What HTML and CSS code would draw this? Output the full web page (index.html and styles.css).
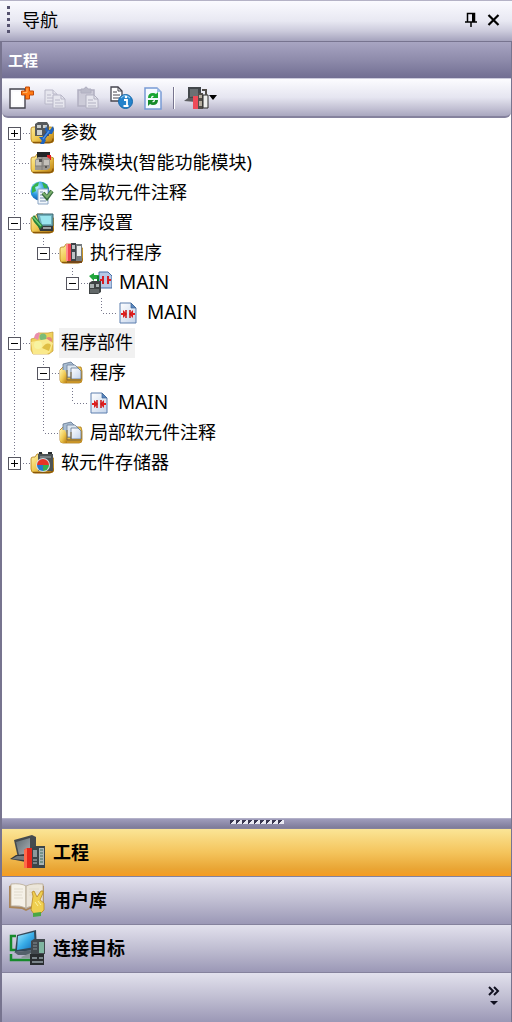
FILE: index.html
```html
<!DOCTYPE html>
<html lang="zh-CN">
<head>
<meta charset="utf-8">
<meta name="viewport" content="width=device-width, initial-scale=1">
<title>导航</title>
<link rel="stylesheet" href="styles.css">
</head>
<body>
<svg class="defs" aria-hidden="true">
  <defs>
    <linearGradient id="gold" x1="0" y1="0" x2="1" y2="1"><stop offset="0" stop-color="#fff3a8"/><stop offset=".5" stop-color="#eec850"/><stop offset="1" stop-color="#b5780c"/></linearGradient>
    <linearGradient id="sheet" x1="0" y1="0" x2="1" y2="1"><stop offset="0" stop-color="#fff"/><stop offset="1" stop-color="#c3d3ea"/></linearGradient>
    <linearGradient id="screen" x1="0" y1="0" x2="1" y2="1"><stop offset="0" stop-color="#a8ecff"/><stop offset=".5" stop-color="#3aaee8"/><stop offset="1" stop-color="#0f66b5"/></linearGradient>
    <linearGradient id="steel" x1="0" y1="0" x2="1" y2="1"><stop offset="0" stop-color="#5f6a70"/><stop offset="1" stop-color="#a9b1b6"/></linearGradient>
    <radialGradient id="globe" cx=".35" cy=".3" r=".8"><stop offset="0" stop-color="#b8f0ff"/><stop offset=".5" stop-color="#2a9ae0"/><stop offset="1" stop-color="#0c4aa0"/></radialGradient>
  </defs>
  <symbol id="folder" viewBox="0 0 24 24">
    <path d="M1 8q0-2 2-2h2l2-3h6l2 3h6q3 0 3 3v9q0 4-4 4H5q-4 0-4-4z" fill="url(#gold)" stroke="#b07c18" stroke-width=".8"/>
    <path d="M3 21.500h16q4 0 4-4" fill="none" stroke="#8a5708" stroke-width="1.300"/>
  </symbol>
  <symbol id="docs" viewBox="0 0 24 24">
    <path d="M1 9l3-3h18l1 4v9q0 3-3 3H4q-3 0-3-3z" fill="url(#gold)" stroke="#a87618" stroke-width=".8"/>
    <path d="M4 3l8-2 3 3v12H4z" fill="#a9bdd2" stroke="#61758f" stroke-width=".8"/>
    <path d="M8 4h8l3 3v9H8z" fill="#dce6f0" stroke="#6e8199" stroke-width=".8"/>
    <path d="M12 7h7l3 3v8H12z" fill="url(#sheet)" stroke="#61758f" stroke-width=".8"/>
    <path d="M1 9h5l2 5v8H4q-3 0-3-3z" fill="url(#gold)"/>
    <path d="M8 18h15v1q0 3-3 3H8z" fill="#c89428"/>
    <path d="M8 9v10h14M12 11v7" fill="none" stroke="#806a3c"/>
  </symbol>
  <symbol id="ladder" viewBox="0 0 18 22">
    <path d="M1 1h11l5 5v15H1z" fill="url(#sheet)" stroke="#5d7fae"/>
    <path d="M12 1v5h5z" fill="#5b88c0" stroke="#3e6695" stroke-width=".7"/>
    <path d="M2 12h3M13 12h3" stroke="#e02020" stroke-width="2"/>
    <path d="M4 8l4 4-4 4zM14 8l-4 4 4 4z" fill="#e02020"/>
    <path d="M7 8v8M11 8v8" stroke="#c81818" stroke-width="1.500"/>
  </symbol>
  <symbol id="plc" viewBox="0 0 36 36">
    <path d="M5 6l18-5 4 2v20l-18 1z" fill="#454a4e"/>
    <path d="M7 8l14-4v15l-11 2z" fill="url(#steel)"/>
    <path d="M1 25l6-4 14-1-4 8z" fill="#34383c"/>
    <path d="M3 25l5-3h10l-3 4z" fill="#767b7e"/>
    <path d="M15 16l3-2h6v20h-9z" fill="#e5281c"/><path d="M15 16l3-2v20h-3z" fill="#ff694a"/>
    <path d="M23 14l4-2h9v22H23z" fill="#3c4549"/>
    <path d="M24 16h4v7h-4z" fill="#8b979b"/><path d="M30 14h5v17h-5z" fill="#a9b5b6"/>
    <path d="M31 16h3M31 19h3M31 22h3M31 25h3M31 28h3" stroke="#40705e"/>
    <path d="M24 26h4M24 29h4" stroke="#b7c2c5"/>
  </symbol>
</svg>

<main class="panel">
  <header class="titlebar">
    <span class="grip"></span>
    <h1 class="title">导航</h1>
    <button class="title-btn" type="button" aria-label="自动隐藏">
      <svg width="12" height="16" viewBox="0 0 12 16"><path d="M2.500 10V1.500h7V10M0 10h12M6 10v5" fill="none" stroke="#000" stroke-width="1.500"/><path d="M7 1h3v9H7z"/></svg>
    </button>
    <button class="title-btn" type="button" aria-label="关闭">
      <svg width="13" height="12" viewBox="0 0 13 12"><path d="M1.500 1l10 10M11.500 1l-10 10" stroke="#000" stroke-width="2.200"/></svg>
    </button>
  </header>

  <div class="body">
    <h2 class="section">工程</h2>

    <div class="toolbar">
      <button class="tool" type="button" aria-label="新建">
        <svg width="26" height="24" viewBox="0 0 26 24"><path d="M2 3h15v19H2z" fill="#fbfbfd" stroke="#46454f" stroke-width="1.400"/><path d="M5 6h9v13H5z" fill="#fff"/><path d="M17.500 1h4v4h4v4h-4v4h-4V9h-4V5h4z" fill="#ff7a14" stroke="#c24a08"/><path d="M19 2.500v4h-4" fill="none" stroke="#ffb466"/></svg>
      </button>
      <button class="tool" type="button" aria-label="复制" disabled>
        <svg width="24" height="24" viewBox="0 0 24 24"><g fill="#e6e6ee" stroke="#b8b7c8"><path d="M2 4h8l4 4v10H2z"/><path d="M10 4v4h4M4 9h4M4 12h6M4 15h6"/><path d="M10 9h8l4 4v9H10z"/><path d="M18 9v4h4M12 14h5M12 17h8M12 20h8" fill="none"/></g></svg>
      </button>
      <button class="tool" type="button" aria-label="粘贴" disabled>
        <svg width="24" height="24" viewBox="0 0 24 24"><g stroke="#b1b0c1"><path d="M2 4h16v16H2z" fill="#cccbd8" stroke-width="1.500"/><path d="M5 5V3h3q2-4 4 0h3v4H5z" fill="#babac9"/><path d="M10 9h8l4 4v9H10z" fill="#e6e6ee"/><path d="M18 9v4h4M12 14h5M12 17h8M12 20h8" fill="none"/></g></svg>
      </button>
      <button class="tool" type="button" aria-label="属性">
        <svg width="24" height="24" viewBox="0 0 24 24"><path d="M2 1h7l4 4v10H2z" fill="#fff" stroke="#46454f" stroke-width="1.300"/><path d="M9 1v4h4M4 6h4M4 9h7M4 12h7" fill="none" stroke="#46454f"/><circle cx="16.500" cy="15.500" r="7" fill="#2583cb" stroke="#1768aa"/><path d="M12 12q4-5 9 0" fill="none" stroke="#8dcbf3" stroke-width="1.200"/><path d="M15 14h3v6M14.500 20h5" fill="none" stroke="#fff" stroke-width="1.800"/><circle cx="17" cy="11" r="1.300" fill="#fff"/></svg>
      </button>
      <button class="tool" type="button" aria-label="刷新">
        <svg width="22" height="24" viewBox="-1 0 22 24"><path d="M2 2h12l4 4v17H2z" fill="#f5faff" stroke="#789bd5" stroke-width="1.500"/><path d="M14 2v4h4z" fill="#a5bfe6"/><path d="M5 12q0-5 5-5 2 0 3 1l2-2v6H9l2-2q-3-1-3 2z" fill="#19a632"/><path d="M15 14q0 5-5 5-2 0-3-1l-2 2v-6h6l-2 2q3 1 3-2z" fill="#168b2a"/></svg>
      </button>
      <span class="divider"></span>
      <button class="tool tool-menu" type="button" aria-label="视图">
        <svg width="25" height="24" viewBox="0 0 25 24"><path d="M4 1h13v11L4 13z" fill="#43474b"/><path d="M6 3h8v7l-8 1z" fill="#6b7073"/><path d="M0 15l4-3h10l-2 4z" fill="#5d5e61"/><path d="M9 10h5v13H9z" fill="#ed4b58"/><path d="M14 7h5v16h-5z" fill="#514d49"/><path d="M15 9h3v3h-3zM15 15h3v5h-3z" fill="#b5ad9f"/><path d="M19 9h5v13h-5z" fill="#efefed" stroke="#282829"/><path d="M18 4h4v5" fill="none" stroke="#514d49" stroke-width="2"/></svg>
        <svg width="8" height="5" viewBox="0 0 8 5"><path d="M0 0h8L4 5z"/></svg>
      </button>
    </div>

    <nav class="tree-pane">
      <ul class="tree">
        <li class="node">
          <div class="row"><button class="toggle plus" type="button" aria-label="展开 参数"></button><span class="link"></span>
            <svg class="icon" viewBox="0 0 24 24"><use href="#folder"/><path d="M5 3l3-2h9l2 3v11H5z" fill="#55595c"/><path d="M7 4h4v3H7zM13 4h4v3h-4zM7 9h5v5H7z" fill="#cdd1d0"/><path d="M13 18l6-8" stroke="#174a9c" stroke-width="3.500"/><path d="M16 5l-1 4 3 4h4l2-4-1-4-3 4h-2zM9 16l4 0 3 3-2 4h-4l2-3z" fill="#1e63bf"/><path d="M13 18l6-8" stroke="#4b92e8" stroke-width="1.500"/></svg>
            <span class="label">参数</span></div>
        </li>
        <li class="node">
          <div class="row"><span class="link link-leaf"></span>
            <svg class="icon" viewBox="0 0 24 24"><use href="#folder"/><path d="M7 1h13v6H7z" fill="#222527"/><path d="M17 4h4v5h-4z" fill="#e21d24"/><path d="M5 9l3-3h9l3 2v9l-3 2H5z" fill="#9a9791"/><path d="M6 9h6v6H6zM14 9h5v5h-5z" fill="#c4c1ba"/><path d="M12 6v13M5 15h14" stroke="#807e7a"/><path d="M9 8h3v3H9zM15 15h2v2h-2z" fill="#565553"/></svg>
            <span class="label">特殊模块(智能功能模块)</span></div>
        </li>
        <li class="node">
          <div class="row"><span class="link link-leaf"></span>
            <svg class="icon" viewBox="0 0 24 24"><circle cx="10" cy="10" r="9.500" fill="url(#globe)"/><path d="M2 6q3-4 7-5l-1 4-3 1 1 4-4 2zM12 1l5 3 1 4-4-1z" fill="#35b34b"/><path d="M8 8h10v15H8z" fill="#f0f6fb" stroke="#8ba5c4"/><path d="M10 11h3M10 14h3M10 17h5M10 20h6" stroke="#7890af"/><path d="M13 12l4 5 5-7" fill="none" stroke="#386b3d" stroke-width="4"/><path d="M13 12l4 4 5-6" fill="none" stroke="#78ae6b" stroke-width="2"/></svg>
            <span class="label">全局软元件注释</span></div>
        </li>
        <li class="node">
          <div class="row"><button class="toggle" type="button" aria-label="折叠 程序设置"></button><span class="link"></span>
            <svg class="icon" viewBox="0 0 24 24"><use href="#folder"/><path d="M7 3h16v12H10z" fill="#6eaeb9" stroke="#3d6570"/><path d="M10 5h11v8H12z" fill="#9be5ee"/><path d="M8 15h15v5H10z" fill="#35393a"/><path d="M13 17h8" stroke="#bcc2c0" stroke-width="1.500"/><path d="M2 7l2-3 4 5 5 6-3 3-6-7z" fill="#248139"/><path d="M3 6l8 9" stroke="#75cc76" stroke-width="1.500"/></svg>
            <span class="label">程序设置</span></div>
          <ul class="branch">
            <li class="node">
              <div class="row"><button class="toggle" type="button" aria-label="折叠 执行程序"></button><span class="link"></span>
                <svg class="icon" viewBox="0 0 24 24"><use href="#folder"/><path d="M7 3h5v17H7z" fill="#ee4650"/><path d="M7 3h2v17H7z" fill="#ff8d8c"/><path d="M12 2h5v18h-5z" fill="#3f4449"/><path d="M13 4h3v4h-3zM13 11h3v7h-3z" fill="#bec3c5"/><path d="M17 3h6v17h-6z" fill="#777c7e"/><path d="M18 5h4v10h-4z" fill="#eceeed"/><path d="M8 21h15" stroke="#754718" stroke-width="2"/></svg>
                <span class="label">执行程序</span></div>
              <ul class="branch">
                <li class="node">
                  <div class="row"><button class="toggle" type="button" aria-label="折叠 MAIN"></button><span class="link"></span>
                    <svg class="icon" viewBox="0 0 24 24"><path d="M11 1h9l4 4v12H11z" fill="#b6c8e5" stroke="#466ea5"/><path d="M12 9h3M20 9h3" stroke="#df2020" stroke-width="2"/><path d="M15 5v8M20 5v8" stroke="#d31d25" stroke-width="2"/><path d="M1 5l5-3v2h5v4H6v2z" fill="#22a73e"/><path d="M10 5v7H7" fill="none" stroke="#128130" stroke-width="2"/><path d="M1 12l3-2h9v11l-3 2H1z" fill="#3e4344"/><path d="M2 13h4v4H2zM8 13h3v3H8z" fill="#a8b0b0"/><path d="M2 19h9M2 21h9" stroke="#868e8e"/></svg>
                    <span class="label latin">MAIN</span></div>
                  <ul class="branch">
                    <li class="node">
                      <div class="row"><span class="link link-leaf"></span><svg class="icon icon-page"><use href="#ladder"/></svg><span class="label latin">MAIN</span></div>
                    </li>
                  </ul>
                </li>
              </ul>
            </li>
          </ul>
        </li>
        <li class="node">
          <div class="row"><button class="toggle" type="button" aria-label="折叠 程序部件"></button><span class="link"></span>
            <svg class="icon" viewBox="0 0 24 24"><path d="M1 8l4-1 3-5h10l5-1v19l-4 3H3l-2-4z" fill="#efd05c" stroke="#c49a2c" stroke-width=".7"/><path d="M4 7q1-6 6-5l-2 7z" fill="#ea8eac"/><circle cx="13" cy="6" r="3.500" fill="#7cbc78"/><circle cx="19" cy="9" r="3" fill="#e58878"/><path d="M1 11l16-3 6 4-3 9-3 2H3z" fill="#fae98c"/><circle cx="8" cy="14" r="4" fill="#f8f3a0"/><path d="M12 17q5-7 9-3l-2 6z" fill="#dfbe45"/></svg>
            <span class="label selected">程序部件</span></div>
          <ul class="branch">
            <li class="node">
              <div class="row"><button class="toggle" type="button" aria-label="折叠 程序"></button><span class="link"></span><svg class="icon"><use href="#docs"/></svg><span class="label">程序</span></div>
              <ul class="branch">
                <li class="node">
                  <div class="row"><span class="link link-leaf"></span><svg class="icon icon-page"><use href="#ladder"/></svg><span class="label latin">MAIN</span></div>
                </li>
              </ul>
            </li>
            <li class="node">
              <div class="row"><span class="link link-leaf"></span><svg class="icon"><use href="#docs"/></svg><span class="label">局部软元件注释</span></div>
            </li>
          </ul>
        </li>
        <li class="node">
          <div class="row"><button class="toggle plus" type="button" aria-label="展开 软元件存储器"></button><span class="link"></span>
            <svg class="icon" viewBox="0 0 24 24"><use href="#folder"/><path d="M9 1h3v3H9zM18 1h4v4h-4z" fill="#292d2f"/><path d="M8 3h15v17H8z" fill="#4d5355"/><path d="M10 5h11v2H10z" fill="#778082"/><circle cx="13" cy="14" r="7" fill="#d2dde4"/><path d="M13 14V8a6 6 0 0 0-6 6z" fill="#e63325"/><path d="M13 14V8a6 6 0 0 1 6 6z" fill="#e63325"/><path d="M13 14h6a6 6 0 0 1-6 6z" fill="#35ad50"/><path d="M13 14v6a6 6 0 0 1-6-6z" fill="#2279cf"/></svg>
            <span class="label">软元件存储器</span></div>
        </li>
      </ul>
    </nav>

    <div class="splitter"><span class="dots"></span></div>

    <div class="tabs">
      <button class="tab active" type="button"><svg class="tab-icon"><use href="#plc"/></svg>工程</button>
      <button class="tab" type="button">
        <svg class="tab-icon" viewBox="0 0 36 36"><path d="M0 4l3-1v21l11 1 3 2 4-2 12-1V3l2 1v22l-14 1-4 2-4-2-13-1z" fill="#a98559"/><path d="M2 2q10-1 15 2v22q-6-3-15-2z" fill="#f5f1e8" stroke="#b7aa92" stroke-width=".8"/><path d="M17 4q6-3 17-2v22q-11-1-17 2z" fill="#ebe5d9" stroke="#b7aa92" stroke-width=".8"/><path d="M5 7h9M5 10h9M5 13h8M5 16h9M20 7h10M20 10h9M20 13h6" stroke="#e1dbcd"/><path d="M17 4v22" stroke="#c5bcab"/><path d="M23 21l1-7-1-4 2-1 3 6 4-6q3-1 2 2l-3 7 4 3v7l-4 4h-6l-3-4z" fill="#efcf50" stroke="#ba8924" stroke-width=".8"/><path d="M26 20l3 4M29 19l3 4" stroke="#fff2a1"/><path d="M24 31l8-1v4l-8 1z" fill="#4ba644"/></svg>用户库</button>
      <button class="tab" type="button">
        <svg class="tab-icon" viewBox="0 0 36 36"><path d="M7 6H2v14h6M2 24v6h23" fill="none" stroke="#168a2c" stroke-width="2.500"/><path d="M8 5l19-5 1 20-22 2z" fill="#344858"/><path d="M9 6l16-4 1 15-18 3z" fill="url(#screen)"/><path d="M5 22l21-2-2 5H9z" fill="#54616b"/><path d="M12 27l12-5v6H13z" fill="#8c969b"/><path d="M22 11l3-2h11v15H22z" fill="#42494e"/><path d="M30 12h5v11h-5z" fill="#80b5a1"/><path d="M24 13h4M24 16h4M24 19h4" stroke="#879298"/><path d="M21 24h14v11H21z" fill="#292d30"/><path d="M23 27h5v2h-5zM30 27h4v2h-4zM23 31h11v2H23z" fill="#7b858b"/></svg>连接目标</button>
    </div>

    <footer class="overflow">
      <button class="more" type="button" aria-label="配置按钮">
        <svg width="12" height="20" viewBox="0 0 12 20"><path d="M1 1l4 4-4 4M6 1l4 4-4 4" fill="none" stroke="#111120" stroke-width="2"/><path d="M2 15h8l-4 4z" fill="#111120"/></svg>
      </button>
    </footer>
  </div>
</main>
</body>
</html>
```
FILE: styles.css
```css
* {
  box-sizing: border-box;
}

body {
  margin: 0;
  color: #000;
  font-family: "Noto Sans", "Noto Sans CJK SC", sans-serif;
  font-size: 18px;
  line-height: 24px;
}

button {
  margin: 0;
  padding: 0;
  border: 0;
  background: none;
  color: inherit;
  font: inherit;
}

h1,
h2,
ul {
  margin: 0;
  padding: 0;
  font-weight: 400;
  list-style: none;
}

svg {
  display: block;
  flex: none;
}

/* Shared gradients and symbols take no room but must stay rendered */
.defs {
  position: absolute;
  width: 0;
  height: 0;
}

.panel {
  display: flex;
  flex-direction: column;
  min-height: 100vh;
}

.titlebar {
  display: flex;
  align-items: center;
  gap: 10px;
  height: 41px;
  padding: 0 12px 2px 7px;
  border-top: 1px solid #b4b2c6;
  background: linear-gradient(#fafaff, #e8e8f2 50%, #cccbdc 75%, #a5a3bd);
}

.grip {
  width: 4px;
  height: 28px;
  background: conic-gradient(from 0deg at 3px 3px, transparent 75%, #55526f 0) 0 0 / 4px 6px;
}

.title {
  flex: 1;
  padding-left: 1px;
  font-size: 18px;
}

.body {
  display: flex;
  flex: 1;
  flex-direction: column;
  border: solid #77748f;
  border-width: 1px 1px 0 2px;
}

.section {
  height: 36px;
  padding: 6px;
  background: linear-gradient(#a8a5c2, #8e8bab 50%, #716e92);
  color: #fff;
  font-size: 15px;
  font-weight: 700;
}

.toolbar {
  display: flex;
  align-items: center;
  gap: 9px;
  height: 40px;
  padding: 0 6px;
  border-top: 1px solid #cccbdc;
  border-bottom: 2px solid #85829d;
  border-radius: 0 0 6px 6px;
  background: linear-gradient(#fcfcff, #e5e5f0 50%, #c2c0d3 80%, #a9a7bf);
}

.tool-menu {
  display: flex;
  align-items: center;
}

.divider {
  width: 2px;
  height: 22px;
  border-left: 1px solid #77748f;
  background: #fff;
}

.tree-pane {
  flex: 1;
  padding: 0 6px;
  background: #fff;
}

/* Dotted guide down the middle of the toggle column */
.node {
  background: repeating-linear-gradient(#77778c 0 1px, transparent 1px 3px) 6px 0 / 1px 100% no-repeat;
}

.node:last-child {
  background-size: 1px 15px;
}

.tree > .node:first-child {
  background-position: 6px 15px;
}

.branch {
  padding-left: 29px;
}

.row {
  display: flex;
  align-items: center;
  height: 30px;
}

.toggle {
  width: 13px;
  height: 13px;
  border: 1px solid #55555f;
  background: linear-gradient(#000, #000) center / 7px 1px no-repeat, #fff;
}

.plus {
  background: linear-gradient(#000, #000) center / 7px 1px no-repeat, linear-gradient(#000, #000) center / 1px 7px no-repeat, #fff;
}

.link {
  width: 9px;
  height: 1px;
  background: repeating-linear-gradient(90deg, transparent 0 2px, #77778c 2px 3px);
}

.link-leaf {
  width: 16px;
  margin-left: 6px;
}

.icon {
  width: 24px;
  height: 24px;
}

.icon-page {
  width: 18px;
  height: 22px;
  margin: 0 3px 0 2px;
}

.label {
  height: 30px;
  margin-left: 5px;
  padding: 0 2px;
  line-height: 28px;
  white-space: nowrap;
}

.latin {
  font-size: 19px;
}

.selected {
  background: #f1f1f1;
}

.splitter {
  display: flex;
  justify-content: center;
  height: 10px;
  padding-top: 1px;
  border-top: 1px solid #b3b1c8;
  background: linear-gradient(#9f9cbb, #7e7b99);
}

.dots {
  width: 54px;
  height: 4px;
  background: linear-gradient(135deg, #383550 50%, #e9e9f2 50%) 0 0 / 6px 4px;
}

.tab {
  display: flex;
  align-items: center;
  gap: 8px;
  width: 100%;
  height: 48px;
  padding: 0 7px 2px;
  border-top: 1px solid #85829d;
  background: linear-gradient(#e2e1ed, #c0bed2 50%, #9b98b6);
  font-weight: 700;
}

.active {
  background: linear-gradient(#fbe596, #f4c45c 50%, #e9a534 85%, #f79c20);
}

.tab-icon {
  width: 36px;
  height: 36px;
}

.overflow {
  display: flex;
  align-items: center;
  justify-content: flex-end;
  height: 50px;
  padding: 0 11px 4px;
  border-top: 1px solid #85829d;
  background: linear-gradient(#e2e1ed, #c0bed2 50%, #9b98b6);
}
```
